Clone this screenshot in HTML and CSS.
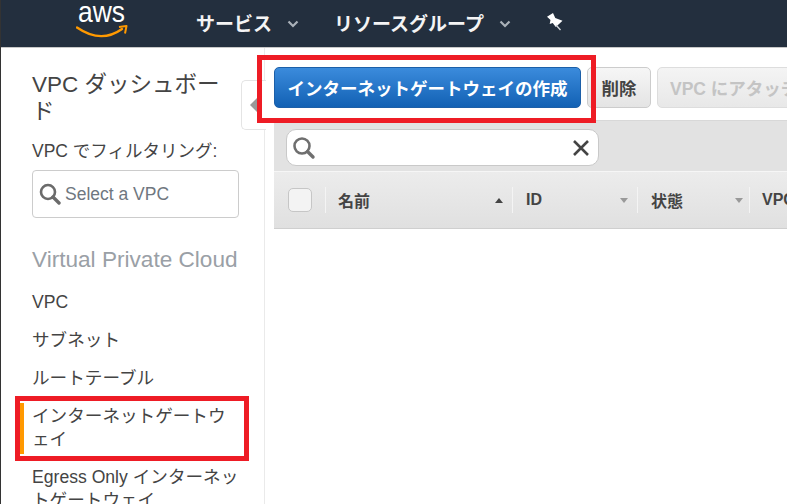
FILE: index.html
```html
<!DOCTYPE html>
<html lang="ja">
<head>
<meta charset="utf-8">
<title>VPC</title>
<link rel="stylesheet" href="styles.css">
</head>
<body>
<div class="page">
  <header class="topbar">
    <svg class="logo" width="53" height="38" viewBox="0 0 53 38">
      <text x="2" y="22" textLength="47" lengthAdjust="spacingAndGlyphs" class="logo-text">aws</text>
      <path d="M1 27.500 Q25 44 46 29" fill="none" stroke="#f90" stroke-width="2.400" stroke-linecap="round"/>
      <path d="M43 27 L50.500 26 L49 33.500" fill="none" stroke="#f90" stroke-width="2" stroke-linejoin="round"/>
    </svg>
    <nav class="topnav">
      <span class="topitem items-service">サービス<svg class="chev" width="12" height="8" viewBox="0 0 12 8"><path d="M1.500 1.500 L6 6 L10.500 1.500" fill="none" stroke="#aab1b9" stroke-width="2.200"/></svg></span>
      <span class="topitem">リソースグループ<svg class="chev" width="12" height="8" viewBox="0 0 12 8"><path d="M1.500 1.500 L6 6 L10.500 1.500" fill="none" stroke="#aab1b9" stroke-width="2.200"/></svg></span>
      <svg class="pin" width="16" height="20" viewBox="0 0 16 20"><path d="M0 4.700 L6 1 L8.300 6 L15.500 8.700 L8.800 15 L5.700 11 L2.700 12 L3.500 8 Z" fill="#fff"/><path d="M9 13 L13.500 18" stroke="#d8dce0" stroke-width="1.300"/></svg>
    </nav>
  </header>
  <div class="content">
    <aside class="sidebar">
      <h1 class="side-title">VPC ダッシュボード</h1>
      <div class="filter-label">VPC でフィルタリング:</div>
      <div class="vpc-select">
        <svg width="22" height="22" viewBox="0 0 22 22"><circle cx="9" cy="9" r="7" fill="none" stroke="#6b6b6b" stroke-width="2.600"/><path d="M14 14 L20 20" stroke="#6b6b6b" stroke-width="3.400" stroke-linecap="round"/></svg>
        <span>Select a VPC</span>
      </div>
      <h2 class="side-section">Virtual Private Cloud</h2>
      <ul class="side-nav">
        <li>VPC</li>
        <li>サブネット</li>
        <li>ルートテーブル</li>
        <li class="active">インターネットゲートウェイ</li>
        <li>Egress Only インターネットゲートウェイ</li>
      </ul>
    </aside>
    <main class="main">
      <div class="toolbar">
        <button class="btn btn-primary">インターネットゲートウェイの作成</button>
        <button class="btn btn-normal">削除</button>
        <button class="btn btn-disabled">VPC にアタッチ</button>
      </div>
      <div class="searchbar">
        <div class="searchbox">
          <svg width="24" height="24" viewBox="0 0 24 24"><circle cx="10" cy="10" r="7.500" fill="none" stroke="#6f6f6f" stroke-width="2.600"/><path d="M15.500 15.500 L21 21" stroke="#6f6f6f" stroke-width="3.400" stroke-linecap="round"/></svg>
          <svg width="18" height="18" viewBox="0 0 18 18"><path d="M2 2 L16 16 M16 2 L2 16" stroke="#444" stroke-width="2.600"/></svg>
        </div>
      </div>
      <div class="tablehead">
        <div class="col col-check"><span class="checkbox"></span></div>
        <div class="col col-name"><span>名前</span><i class="sort sort-up"></i></div>
        <div class="col col-id"><span>ID</span><i class="sort"></i></div>
        <div class="col col-state"><span>状態</span><i class="sort"></i></div>
        <div class="col col-vpc"><span>VPC</span></div>
      </div>
    </main>
  </div>
  <div class="collapse"><i></i></div>
  <div class="mark mark-button"></div>
  <div class="mark mark-nav"></div>
</div>
</body>
</html>
```

FILE: styles.css
```css
* { box-sizing: border-box; }
html, body { margin: 0; padding: 0; height: 100%; overflow: hidden; background: #fff; }
body { font-family: "Liberation Sans", "Noto Sans CJK JP", sans-serif; color: #444; }
.page { position: relative; width: 787px; height: 504px; overflow: hidden; border-left: 1px solid #333; }

.topbar { height: 48px; background: #232f3e; border-bottom: 1px solid #c8c8c8; display: flex; align-items: flex-start; color: #fff; }
.logo { margin: 0 0 0 75px; flex: none; }
.logo-text { font: 29px "Liberation Sans", sans-serif; fill: #fff; }
.topnav { display: flex; align-items: center; margin-left: 67px; height: 44px; }
.topitem { display: flex; align-items: center; font-size: 19px; font-weight: 700; color: #f4f4f4; white-space: nowrap; }
.chev { margin-left: 15px; margin-top: 3px; }
.items-service { margin-right: 35px; }
.topitem + .topitem { margin-right: 38px; }
.pin { margin-top: 0; margin-left: -2px; }

.content { display: flex; height: 456px; }
.sidebar { width: 264px; flex: none; border-right: 1px solid #eaeaea; padding: 23px 25px 0 31px; }
.side-title { margin: 0; font-size: 22.500px; line-height: 27px; font-weight: 400; color: #444; }
.filter-label { margin-top: 15px; font-size: 17.500px; line-height: 22px; color: #444; white-space: nowrap; }
.vpc-select { margin-top: 8px; width: 207px; height: 48px; border: 1px solid #ccc; border-radius: 4px; display: flex; align-items: center; padding-left: 6px; font-size: 17.500px; color: #6f7780; }
.vpc-select svg { flex: none; margin-right: 4px; }
.side-section { margin: 27px 0 0; font-size: 22.600px; line-height: 30px; font-weight: 400; color: #9aa0a6; white-space: nowrap; }
.side-nav { list-style: none; margin: 8px 0 0; padding: 0; font-size: 17.600px; line-height: 23px; color: #444; }
.side-nav li { padding: 8px 0 7px; }
.side-nav li.active { position: relative; }
.side-nav li.active::before { content: ""; position: absolute; left: -12px; top: 6px; bottom: 4px; width: 4px; background: #f90; }

.main { flex: 1; min-width: 0; padding: 19px 0 0 9px; overflow: hidden; }
.toolbar { display: flex; gap: 6px; height: 54px; border-bottom: 1px solid #d8d8d8; white-space: nowrap; }
.btn { height: 41px; border-radius: 5px; font: 700 17.500px "Liberation Sans", "Noto Sans CJK JP", sans-serif; padding: 0; flex: none; }
.btn-primary { width: 307px; color: #fff; border: 1px solid #1c5fa8; background: linear-gradient(#3b8bdc, #1261b4); }
.btn-normal { width: 64px; color: #444; border: 1px solid #ccc; background: linear-gradient(#f6f6f6, #e4e4e4); }
.btn-disabled { width: 220px; padding-left: 12px; text-align: left; color: #c4c4c4; border: 1px solid #ddd; background: linear-gradient(#f4f4f4, #e8e8e8); }

.searchbar { height: 51px; background: #e2e2e2; padding: 8px 0 0 12px; border-bottom: 1px solid #f6f6f6; }
.searchbox { width: 313px; height: 37px; background: #fff; border: 1px solid #c9c9c9; border-radius: 10px; display: flex; align-items: center; justify-content: space-between; padding: 0 8px 0 5px; }
.tablehead { height: 57px; background: linear-gradient(#ececec, #e0e0e0); border-bottom: 1px solid #cfcfcf; display: flex; align-items: center; font-size: 16px; font-weight: 700; color: #444; white-space: nowrap; }
.col { height: 26px; display: flex; align-items: center; flex: none; border-right: 1px solid #f4f4f4; }
.col-check { width: 52px; padding-left: 14px; }
.checkbox { width: 24px; height: 24px; border: 1px solid #c6c6c6; border-radius: 5px; background: #f3f3f3; }
.col-name { width: 187px; padding: 0 9px 0 12px; justify-content: space-between; }
.col-id { width: 125px; padding: 0 9px 0 13px; justify-content: space-between; }
.col-state { width: 112px; padding: 0 6px 0 13px; justify-content: space-between; }
.col-vpc { padding-left: 12px; border: 0; }
.sort { width: 0; height: 0; border-left: 4.500px solid transparent; border-right: 4.500px solid transparent; border-top: 5px solid #999; }
.sort-up { border-top: 0; border-bottom: 5px solid #444; }

.mark { position: absolute; border: 5px solid #ee1c25; pointer-events: none; }
.mark-button { left: 256px; top: 55px; width: 339px; height: 68px; }
.mark-nav { left: 14px; top: 396px; width: 234px; height: 65px; }
.collapse { position: absolute; left: 240px; top: 80px; width: 25px; height: 50px; background: #fff; border: 1px solid #e4e4e4; border-right: 0; border-radius: 5px 0 0 5px; display: flex; align-items: center; padding-left: 8px; }
.collapse i { width: 0; height: 0; border-top: 7px solid transparent; border-bottom: 7px solid transparent; border-right: 7px solid #999; }
```
